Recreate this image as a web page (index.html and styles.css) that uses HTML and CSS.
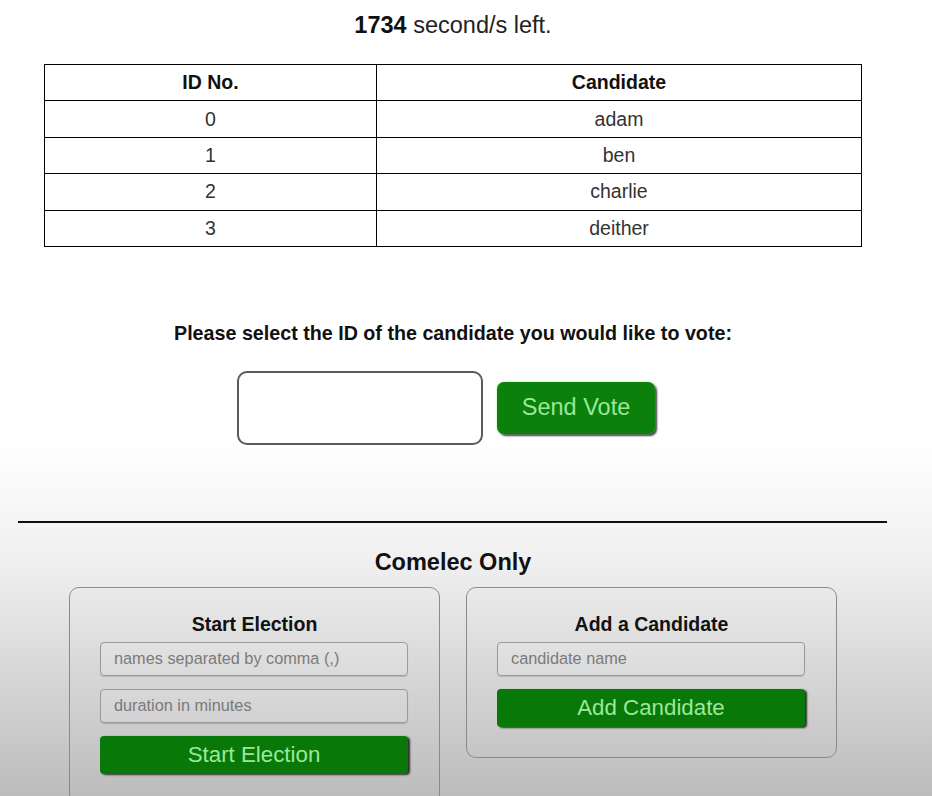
FILE: index.html
```html
<!DOCTYPE html>
<html lang="en">
<head>
<meta charset="utf-8">
<title>Voting</title>
<link rel="stylesheet" href="styles.css">
</head>
<body>
<div class="page">
  <div class="timer"><b>1734</b> second/s left.</div>
  <table class="cands">
    <thead>
      <tr><th class="c1">ID No.</th><th>Candidate</th></tr>
    </thead>
    <tbody>
      <tr><td>0</td><td>adam</td></tr>
      <tr><td>1</td><td>ben</td></tr>
      <tr><td>2</td><td>charlie</td></tr>
      <tr><td>3</td><td>deither</td></tr>
    </tbody>
  </table>
  <div class="question">Please select the ID of the candidate you would like to vote:</div>
  <div class="vote-row">
    <input class="vote-input" type="text">
    <button class="vote-btn">Send Vote</button>
  </div>
  <hr class="sep">
  <div class="comelec">Comelec Only</div>
  <div class="cards">
    <div class="card">
      <div class="card-title">Start Election</div>
      <input class="field" type="text" placeholder="names separated by comma (,)">
      <input class="field" type="text" placeholder="duration in minutes">
      <button class="action">Start Election</button>
    </div>
    <div class="card">
      <div class="card-title">Add a Candidate</div>
      <input class="field" type="text" placeholder="candidate name">
      <button class="action">Add Candidate</button>
    </div>
  </div>
</div>
</body>
</html>
```
FILE: styles.css
```css
html, body {
  margin: 0;
  padding: 0;
}
body {
  min-height: 796px;
  background: linear-gradient(to bottom, #ffffff 0, #ffffff 440px, #f0f0f0 560px, #bcbcbc 796px);
  font-family: "Liberation Sans", Arial, sans-serif;
  color: #1a1a1a;
}
.page {
  width: 906px;
  display: flex;
  flex-direction: column;
  align-items: center;
}
.timer {
  padding-top: 12px;
  font-size: 23.5px;
  line-height: 27px;
  color: #222;
}
.timer b {
  color: #111;
}
.cands {
  margin-top: 25px;
  width: 818px;
  border-collapse: collapse;
  border: 1px solid #000;
  font-size: 19.5px;
}
.cands th, .cands td {
  border: 1px solid #000;
  height: 35.4px;
  padding: 0;
  text-align: center;
  vertical-align: middle;
}
.cands th {
  font-weight: bold;
  color: #111;
}
.cands td {
  color: #333;
}
.cands .c1 {
  width: 331px;
}
.question {
  margin-top: 74px;
  font-size: 19.7px;
  line-height: 24px;
  font-weight: bold;
  color: #111;
}
.vote-row {
  margin-top: 26px;
  display: flex;
  align-items: center;
  gap: 14px;
  padding-right: 14px;
}
.vote-input {
  box-sizing: border-box;
  width: 246px;
  height: 74px;
  border: 2px solid #5a5a5a;
  border-radius: 10px;
  background: #fff;
  margin: 0;
}
.vote-btn {
  box-sizing: border-box;
  width: 158px;
  height: 52px;
  border: none;
  border-radius: 7px;
  background: #0b800b;
  color: #9be89b;
  font-family: "Liberation Sans", Arial, sans-serif;
  font-size: 23.5px;
  box-shadow: 0 0 2px #8fdc8f, 2px 2px 2px #3a3a3a;
  margin: 0;
  padding: 0;
}
.sep {
  align-self: flex-start;
  margin: 76px 0 0 18px;
  width: 869px;
  height: 2px;
  border: none;
  background: #111;
}
.comelec {
  margin-top: 25px;
  font-size: 23.5px;
  line-height: 28px;
  font-weight: bold;
  color: #111;
}
.cards {
  margin-top: 11px;
  display: flex;
  gap: 26px;
  align-items: flex-start;
}
.card {
  box-sizing: border-box;
  width: 371px;
  border: 1px solid #8a8a8a;
  border-radius: 10px;
  padding: 24px 30px 30px 30px;
  display: flex;
  flex-direction: column;
  align-items: stretch;
}
.card-title {
  text-align: center;
  font-size: 19.5px;
  line-height: 24px;
  font-weight: bold;
  color: #111;
  margin-bottom: 6px;
}
.field {
  box-sizing: border-box;
  width: 308px;
  height: 34px;
  margin: 0 0 13px 0;
  border: 1px solid #9a9a9a;
  border-radius: 4px;
  background: rgba(255, 255, 255, 0.12);
  padding: 0 13px;
  font-family: "Liberation Sans", Arial, sans-serif;
  font-size: 16.3px;
  color: #333;
  box-shadow: 0 1px 1px rgba(0,0,0,0.15);
}
.field::placeholder {
  color: #7a7a7a;
}
.action {
  box-sizing: border-box;
  width: 308px;
  height: 38px;
  margin: 0;
  border: none;
  border-radius: 4px;
  background: #087808;
  color: #9be89b;
  font-family: "Liberation Sans", Arial, sans-serif;
  font-size: 22.3px;
  padding: 0;
  box-shadow: 2px 1px 2px #2e2e2e;
}
```
